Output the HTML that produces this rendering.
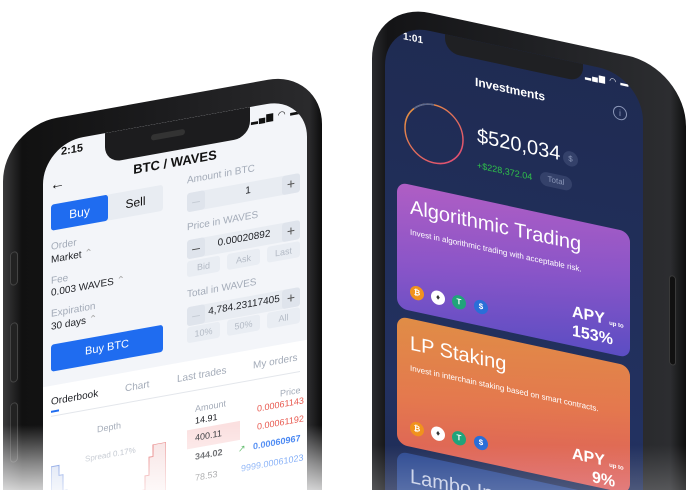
<!DOCTYPE html>
<html style="width:692px;height:490px;overflow:hidden"><head><meta charset="utf-8"><style>
*{margin:0;padding:0;box-sizing:border-box}
body{width:692px;height:490px;overflow:hidden;background:#fff;position:relative;font-family:"Liberation Sans",sans-serif}
.abs{position:absolute}
#L{position:absolute;left:0;top:0;width:340px;height:700px;transform:skewY(-10.2deg);transform-origin:0 0}
#R{position:absolute;left:370px;top:0;width:330px;height:700px;transform:skewY(12.2deg);transform-origin:0 0}
.lbl{position:absolute;font-size:10px;color:#a3abb8;white-space:nowrap}
.val{position:absolute;font-size:10px;color:#1d1f24;white-space:nowrap}
.box{position:absolute;background:#e8ecf2;border-radius:3px}
.btn{position:absolute;background:#dfe4ec;border-radius:3px;color:#9aa3b0;font-size:14px;text-align:center}
.chip{position:absolute;background:#e9edf3;border-radius:3px;color:#b3bac5;font-size:9px;text-align:center}
.coin{position:absolute;width:14px;height:14px;border-radius:50%;font-size:8px;color:#fff;text-align:center;line-height:14px;font-weight:bold}
</style></head><body>
<div class="abs" style="left:0;top:0;width:692px;height:490px;overflow:hidden">
<div id="L">
  <div class="abs" style="left:3px;top:128px;width:319px;height:520px;border-radius:54px;background:linear-gradient(90deg,#3a3a3c 0%,#111 6%,#1c1c1e 50%,#2a2a2c 96%,#0c0c0c 100%)"></div>
  <div class="abs" style="left:10px;top:254px;width:8px;height:34px;border-radius:4px;background:#222;border:1px solid #444"></div>
  <div class="abs" style="left:10px;top:325px;width:8px;height:60px;border-radius:4px;background:#222;border:1px solid #444"></div>
  <div class="abs" style="left:10px;top:405px;width:8px;height:60px;border-radius:4px;background:#222;border:1px solid #444"></div>
  <div class="abs" style="left:43px;top:152px;width:264px;height:480px;border-radius:40px;background:#f3f5f9;overflow:hidden">
    <div class="abs" style="left:62px;top:0;width:145px;height:30px;background:#1c1c1e;border-radius:0 0 16px 16px"></div>
    <div class="abs" style="left:108px;top:10px;width:34px;height:6px;border-radius:3px;background:#333"></div>
    <div class="abs" style="left:18px;top:5px;font-size:11px;font-weight:bold;color:#111">2:15</div>
    <div class="abs" style="left:208px;top:8px;font-size:9px;color:#111;letter-spacing:1px">▂▄▆ ◠ ▬</div>
    <div class="abs" style="left:0;width:264px;top:34px;text-align:center;font-size:13px;font-weight:bold;color:#111">BTC / WAVES</div>
    <div class="abs" style="left:7px;top:34px;font-size:15px;color:#111">←</div>
    <div class="box" style="left:8px;top:62px;width:112px;height:26px"></div>
    <div class="abs" style="left:8px;top:62px;width:57px;height:26px;background:#1f6cf0;border-radius:3px;color:#fff;font-size:12px;text-align:center;line-height:26px">Buy</div>
    <div class="abs" style="left:65px;top:62px;width:55px;height:26px;color:#111;font-size:12px;text-align:center;line-height:26px">Sell</div>
    <div class="lbl" style="left:8px;top:99px">Order</div>
    <div class="val" style="left:8px;top:112px">Market <span style="color:#aaa">⌃</span></div>
    <div class="lbl" style="left:8px;top:133px">Fee</div>
    <div class="val" style="left:8px;top:145px">0.003 WAVES <span style="color:#aaa">⌃</span></div>
    <div class="lbl" style="left:8px;top:166px">Expiration</div>
    <div class="val" style="left:8px;top:179px">30 days <span style="color:#aaa">⌃</span></div>
    <div class="abs" style="left:8px;top:202px;width:112px;height:27px;background:#1f6cf0;border-radius:3px;color:#fff;font-size:11px;text-align:center;line-height:27px">Buy BTC</div>

    <div class="lbl" style="left:144px;top:57px">Amount in BTC</div>
    <div class="box" style="left:144px;top:75px;width:113px;height:19px"></div>
    <div class="btn" style="left:144px;top:75px;width:18px;height:19px;line-height:18px;color:#c4cad3">–</div>
    <div class="btn" style="left:239px;top:75px;width:18px;height:19px;line-height:18px;color:#555">+</div>
    <div class="val" style="left:180px;top:78px;width:50px;text-align:center">1</div>
    <div class="lbl" style="left:144px;top:104px">Price in WAVES</div>
    <div class="box" style="left:144px;top:122px;width:113px;height:19px"></div>
    <div class="btn" style="left:144px;top:122px;width:18px;height:19px;line-height:18px;color:#444">–</div>
    <div class="btn" style="left:239px;top:122px;width:18px;height:19px;line-height:18px;color:#555">+</div>
    <div class="val" style="left:164px;top:125px;width:74px;text-align:center">0.00020892</div>
    <div class="chip" style="left:144px;top:143px;width:33px;height:16px;line-height:16px">Bid</div>
    <div class="chip" style="left:184px;top:143px;width:33px;height:16px;line-height:16px">Ask</div>
    <div class="chip" style="left:224px;top:143px;width:33px;height:16px;line-height:16px">Last</div>
    <div class="lbl" style="left:144px;top:171px">Total in WAVES</div>
    <div class="box" style="left:144px;top:189px;width:113px;height:19px"></div>
    <div class="btn" style="left:144px;top:189px;width:18px;height:19px;line-height:18px;color:#c4cad3">–</div>
    <div class="btn" style="left:239px;top:189px;width:18px;height:19px;line-height:18px;color:#555">+</div>
    <div class="val" style="left:163px;top:192px;width:76px;text-align:center">4,784.23117405</div>
    <div class="chip" style="left:144px;top:209px;width:33px;height:16px;line-height:16px">10%</div>
    <div class="chip" style="left:184px;top:209px;width:33px;height:16px;line-height:16px">50%</div>
    <div class="chip" style="left:224px;top:209px;width:33px;height:16px;line-height:16px">All</div>

    <div class="abs" style="left:0;top:243px;width:264px;height:240px;background:#fff"></div>
    <div class="val" style="left:8px;top:254px;font-size:10px">Orderbook</div>
    <div class="lbl" style="left:82px;top:254px">Chart</div>
    <div class="lbl" style="left:134px;top:254px">Last trades</div>
    <div class="lbl" style="left:210px;top:254px">My orders</div>
    <div class="abs" style="left:8px;top:268px;width:8px;height:2px;background:#1f6cf0"></div>
    <div class="abs" style="left:8px;top:273px;width:249px;height:1px;background:#e3e6eb"></div>
    <div class="lbl" style="left:54px;top:290px;font-size:9px">Depth</div>
    <div class="lbl" style="left:152px;top:287px;font-size:9px">Amount</div>
    <div class="lbl" style="left:237px;top:287px;font-size:9px">Price</div>
    <div class="abs" style="left:144px;top:312px;width:53px;height:19px;background:#fbe0e0"></div>
    <div class="val" style="left:152px;top:299px;font-size:9px">14.91</div>
    <div class="val" style="left:214px;top:298px;font-size:9px;color:#e8594f">0.00061143</div>
    <div class="val" style="left:152px;top:316px;font-size:9px">400.11</div>
    <div class="val" style="left:214px;top:316px;font-size:9px;color:#e8594f">0.00061192</div>
    <div class="val" style="left:152px;top:335px;font-size:9px;font-weight:bold">344.02</div>
    <div class="val" style="left:195px;top:335px;font-size:9px;color:#2aa53a">↗</div>
    <div class="val" style="left:210px;top:335px;font-size:9px;font-weight:bold;color:#1f6cf0">0.00060967</div>
    <div class="val" style="left:152px;top:356px;font-size:9px">78.53</div>
    <div class="val" style="left:198px;top:355px;font-size:9px;color:#1f6cf0">9999.00061023</div>
    <div class="lbl" style="left:42px;top:318px;font-size:8px">Spread 0.17%</div>
    <svg class="abs" style="left:8px;top:320px" width="115" height="60"><path d="M0 4H8V14H12V30H16V60H0Z" fill="#c8d4ee" stroke="#2a5bd0"/><path d="M115 0H102V12H98V30H94V44H86V60H115Z" fill="#f6dede" stroke="#e05a5a"/></svg>
  </div>
</div>

<div id="R">
  <div class="abs" style="left:2px;top:0;width:314px;height:620px;border-radius:58px;background:linear-gradient(90deg,#2a2b2e 0%,#141416 5%,#1f2023 50%,#2c2d30 95%,#0e0e0e 100%)"></div>
  <div class="abs" style="left:299px;top:210px;width:7px;height:90px;border-radius:4px;background:#111;border:1px solid #3a3a3a"></div>
  <div class="abs" style="left:15px;top:18px;width:258px;height:600px;border-radius:44px;background:linear-gradient(180deg,#1f2b52 0%,#223160 60%,#1a2548 100%);overflow:hidden">
    <div class="abs" style="left:60px;top:0;width:138px;height:18px;background:#1f2023;border-radius:0 0 14px 14px"></div>
    <div class="abs" style="left:18px;top:6px;font-size:10px;font-weight:bold;color:#fff">1:01</div>
    <div class="abs" style="left:200px;top:6px;font-size:8px;color:#fff;letter-spacing:1px">▂▄▆ ◠ ▬</div>
    <div class="abs" style="left:0;width:250px;top:34px;text-align:center;font-size:12px;font-weight:bold;color:#fff">Investments</div>
    <div class="abs" style="left:228px;top:34px;width:14px;height:14px;border-radius:50%;border:1px solid #8b97b8;color:#8b97b8;font-size:9px;text-align:center;line-height:12px">i</div>
    <svg class="abs" style="left:17px;top:70px" width="64" height="64"><defs><linearGradient id="rg" x1="0" y1="0" x2="1" y2="1"><stop offset="0" stop-color="#e59a3a"/><stop offset="1" stop-color="#e0457a"/></linearGradient></defs><circle cx="32" cy="32" r="29" fill="none" stroke="url(#rg)" stroke-width="1.5"/><path d="M12 11A29 29 0 0 1 32 3" stroke="#5a6a90" stroke-width="1.5" fill="none"/></svg>
    <div class="abs" style="left:92px;top:84px;font-size:20px;color:#fff">$520,034</div>
    <div class="abs" style="left:178px;top:90px;width:15px;height:15px;border-radius:50%;background:#34416a;color:#8b97b8;font-size:8px;text-align:center;line-height:15px">$</div>
    <div class="abs" style="left:92px;top:119px;font-size:9px;color:#2fc14a">+$228,372.04</div>
    <div class="abs" style="left:155px;top:116px;width:32px;height:14px;border-radius:7px;background:#34416a;color:#8b97b8;font-size:8px;text-align:center;line-height:14px">Total</div>

    <div class="abs" style="left:12px;top:158px;width:233px;height:126px;border-radius:10px;background:linear-gradient(170deg,#b05ec4 0%,#8a55c8 50%,#5a4dc3 100%)">
      <div class="abs" style="left:13px;top:12px;font-size:20px;color:#fff;white-space:nowrap">Algorithmic Trading</div>
      <div class="abs" style="left:13px;top:43px;font-size:8px;color:#fff;white-space:nowrap">Invest in algorithmic trading with acceptable risk.</div>
      <div class="coin" style="left:13px;top:100px;background:#f0921d">₿</div>
      <div class="coin" style="left:34px;top:100px;background:#fff;color:#333">♦</div>
      <div class="coin" style="left:55px;top:100px;background:#20a47a">T</div>
      <div class="coin" style="left:77px;top:100px;background:#2a6ed8">$</div>
      <div class="abs" style="left:175px;top:84px;font-size:16px;font-weight:bold;color:#fff">APY <span style="font-size:6px">up to</span></div>
      <div class="abs" style="left:175px;top:103px;font-size:16px;font-weight:bold;color:#fff">153%</div>
    </div>
    <div class="abs" style="left:12px;top:292px;width:233px;height:128px;border-radius:10px;background:linear-gradient(170deg,#e08d46 0%,#e4784e 50%,#db5a5c 100%)">
      <div class="abs" style="left:13px;top:14px;font-size:20px;color:#fff;white-space:nowrap">LP Staking</div>
      <div class="abs" style="left:13px;top:44px;width:200px;font-size:8px;color:#fff;line-height:12px">Invest in interchain staking based on smart contracts.</div>
      <div class="coin" style="left:13px;top:102px;background:#f0921d">₿</div>
      <div class="coin" style="left:34px;top:102px;background:#fff;color:#333">♦</div>
      <div class="coin" style="left:55px;top:102px;background:#20a47a">T</div>
      <div class="coin" style="left:77px;top:102px;background:#2a6ed8">$</div>
      <div class="abs" style="left:175px;top:92px;font-size:16px;font-weight:bold;color:#fff">APY <span style="font-size:6px">up to</span></div>
      <div class="abs" style="left:195px;top:111px;font-size:16px;font-weight:bold;color:#fff">9%</div>
    </div>
    <div class="abs" style="left:12px;top:427px;width:233px;height:120px;border-radius:10px;background:#2d4a92">
      <div class="abs" style="left:13px;top:12px;font-size:20px;color:#c8d0e8;white-space:nowrap">Lambo Investing</div>
    </div>
  </div>
</div>

<div class="abs" style="left:0;top:425px;width:345px;height:65px;background:linear-gradient(180deg,rgba(255,255,255,0) 0%,rgba(255,255,255,.5) 60%,rgba(255,255,255,.8) 100%)"></div>
<div class="abs" style="left:360px;top:445px;width:332px;height:45px;background:linear-gradient(180deg,rgba(255,255,255,0) 0%,rgba(255,255,255,.2) 100%)"></div>
</div>
</body></html>
